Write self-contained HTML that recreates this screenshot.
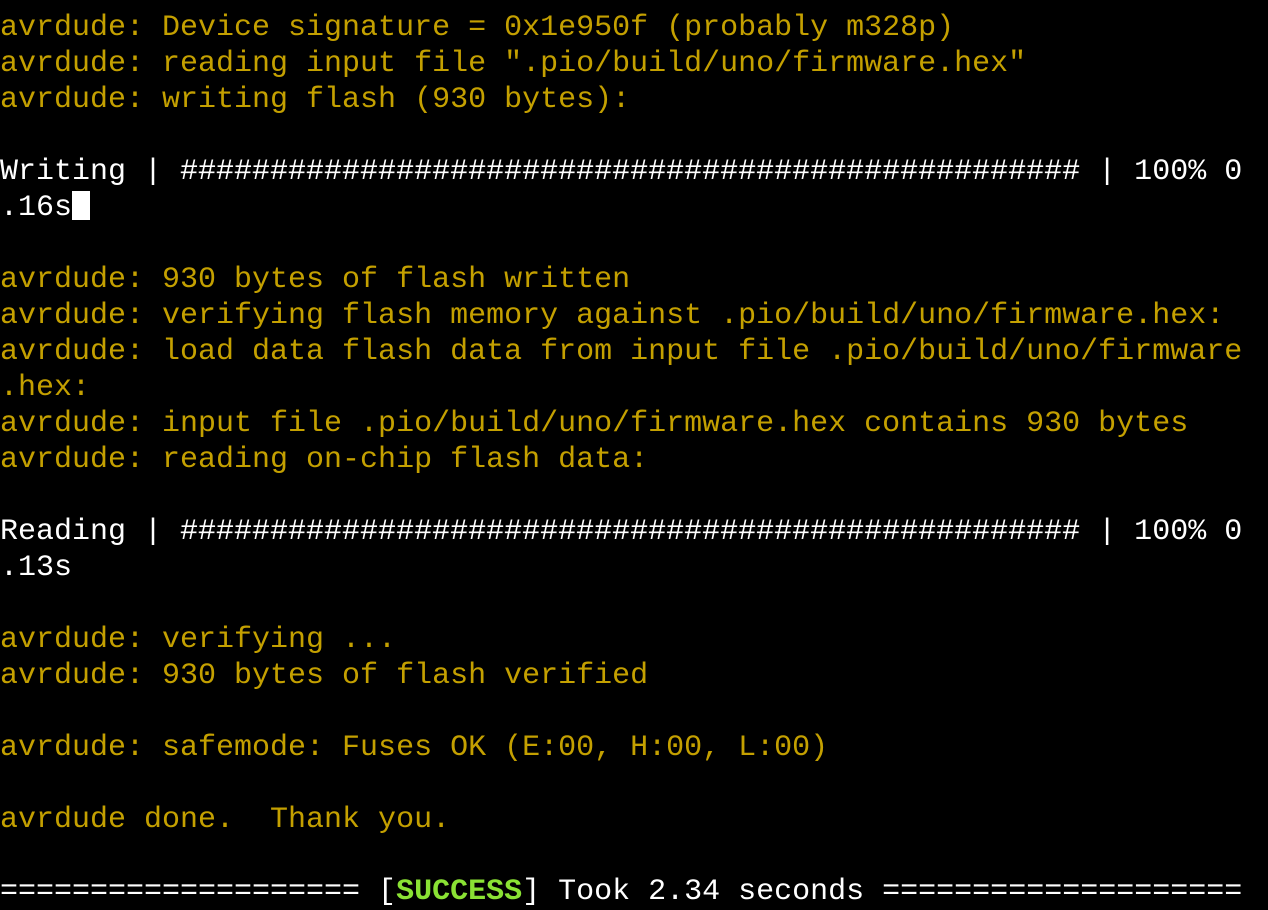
<!DOCTYPE html>
<html><head><style>
html,body{margin:0;padding:0;background:#000;width:1268px;height:908px;overflow:hidden}
pre{margin:0;position:absolute;left:0;top:10px;font-family:"Liberation Mono","DejaVu Sans Mono",monospace;font-size:30px;line-height:36px;color:#c4a000;white-space:pre}
.w{color:#fff}.g{color:#8ae234;font-weight:bold}
.c{display:inline-block;width:18px;height:29px;background:#fff;vertical-align:-5px}
</style></head><body><pre>avrdude: Device signature = 0x1e950f (probably m328p)
avrdude: reading input file ".pio/build/uno/firmware.hex"
avrdude: writing flash (930 bytes):

<span class="w">Writing | ################################################## | 100% 0</span>
<span class="w">.16s</span><span class="c"></span>

avrdude: 930 bytes of flash written
avrdude: verifying flash memory against .pio/build/uno/firmware.hex:
avrdude: load data flash data from input file .pio/build/uno/firmware
.hex:
avrdude: input file .pio/build/uno/firmware.hex contains 930 bytes
avrdude: reading on-chip flash data:

<span class="w">Reading | ################################################## | 100% 0</span>
<span class="w">.13s</span>

avrdude: verifying ...
avrdude: 930 bytes of flash verified

avrdude: safemode: Fuses OK (E:00, H:00, L:00)

avrdude done.  Thank you.

<span class="w">==================== [<span class="g">SUCCESS</span>] Took 2.34 seconds ====================</span></pre></body></html>
